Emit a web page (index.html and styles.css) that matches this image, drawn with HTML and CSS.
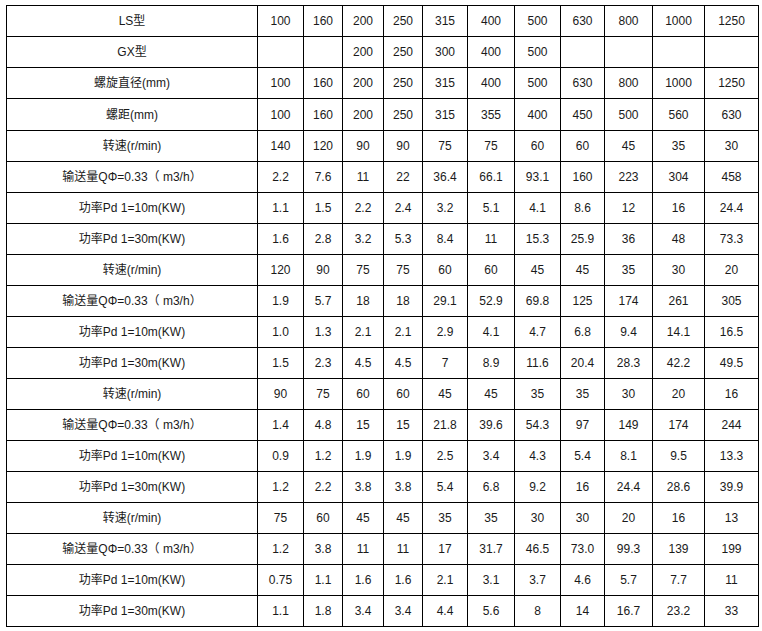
FILE: index.html
```html
<!DOCTYPE html>
<html lang="zh">
<head>
<meta charset="utf-8">
<title>LS型螺旋输送机参数</title>
<link rel="stylesheet" href="styles.css">
</head>
<body>
<table class="spec">
<colgroup>
<col class="c-label">
<col class="c1"><col class="c2"><col class="c3"><col class="c4"><col class="c5"><col class="c6">
<col class="c7"><col class="c8"><col class="c9"><col class="c10"><col class="c11">
</colgroup>
<tbody>
<tr><td>LS型</td><td>100</td><td>160</td><td>200</td><td>250</td><td>315</td><td>400</td><td>500</td><td>630</td><td>800</td><td>1000</td><td>1250</td></tr>
<tr><td>GX型</td><td></td><td></td><td>200</td><td>250</td><td>300</td><td>400</td><td>500</td><td></td><td></td><td></td><td></td></tr>
<tr><td>螺旋直径(mm)</td><td>100</td><td>160</td><td>200</td><td>250</td><td>315</td><td>400</td><td>500</td><td>630</td><td>800</td><td>1000</td><td>1250</td></tr>
<tr class="tall"><td>螺距(mm)</td><td>100</td><td>160</td><td>200</td><td>250</td><td>315</td><td>355</td><td>400</td><td>450</td><td>500</td><td>560</td><td>630</td></tr>
<tr><td>转速(r/min)</td><td>140</td><td>120</td><td>90</td><td>90</td><td>75</td><td>75</td><td>60</td><td>60</td><td>45</td><td>35</td><td>30</td></tr>
<tr><td>输送量QΦ=0.33（ m3/h）</td><td>2.2</td><td>7.6</td><td>11</td><td>22</td><td>36.4</td><td>66.1</td><td>93.1</td><td>160</td><td>223</td><td>304</td><td>458</td></tr>
<tr><td>功率Pd 1=10m(KW)</td><td>1.1</td><td>1.5</td><td>2.2</td><td>2.4</td><td>3.2</td><td>5.1</td><td>4.1</td><td>8.6</td><td>12</td><td>16</td><td>24.4</td></tr>
<tr><td>功率Pd 1=30m(KW)</td><td>1.6</td><td>2.8</td><td>3.2</td><td>5.3</td><td>8.4</td><td>11</td><td>15.3</td><td>25.9</td><td>36</td><td>48</td><td>73.3</td></tr>
<tr><td>转速(r/min)</td><td>120</td><td>90</td><td>75</td><td>75</td><td>60</td><td>60</td><td>45</td><td>45</td><td>35</td><td>30</td><td>20</td></tr>
<tr><td>输送量QΦ=0.33（ m3/h）</td><td>1.9</td><td>5.7</td><td>18</td><td>18</td><td>29.1</td><td>52.9</td><td>69.8</td><td>125</td><td>174</td><td>261</td><td>305</td></tr>
<tr><td>功率Pd 1=10m(KW)</td><td>1.0</td><td>1.3</td><td>2.1</td><td>2.1</td><td>2.9</td><td>4.1</td><td>4.7</td><td>6.8</td><td>9.4</td><td>14.1</td><td>16.5</td></tr>
<tr><td>功率Pd 1=30m(KW)</td><td>1.5</td><td>2.3</td><td>4.5</td><td>4.5</td><td>7</td><td>8.9</td><td>11.6</td><td>20.4</td><td>28.3</td><td>42.2</td><td>49.5</td></tr>
<tr><td>转速(r/min)</td><td>90</td><td>75</td><td>60</td><td>60</td><td>45</td><td>45</td><td>35</td><td>35</td><td>30</td><td>20</td><td>16</td></tr>
<tr><td>输送量QΦ=0.33（ m3/h）</td><td>1.4</td><td>4.8</td><td>15</td><td>15</td><td>21.8</td><td>39.6</td><td>54.3</td><td>97</td><td>149</td><td>174</td><td>244</td></tr>
<tr><td>功率Pd 1=10m(KW)</td><td>0.9</td><td>1.2</td><td>1.9</td><td>1.9</td><td>2.5</td><td>3.4</td><td>4.3</td><td>5.4</td><td>8.1</td><td>9.5</td><td>13.3</td></tr>
<tr><td>功率Pd 1=30m(KW)</td><td>1.2</td><td>2.2</td><td>3.8</td><td>3.8</td><td>5.4</td><td>6.8</td><td>9.2</td><td>16</td><td>24.4</td><td>28.6</td><td>39.9</td></tr>
<tr><td>转速(r/min)</td><td>75</td><td>60</td><td>45</td><td>45</td><td>35</td><td>35</td><td>30</td><td>30</td><td>20</td><td>16</td><td>13</td></tr>
<tr><td>输送量QΦ=0.33（ m3/h）</td><td>1.2</td><td>3.8</td><td>11</td><td>11</td><td>17</td><td>31.7</td><td>46.5</td><td>73.0</td><td>99.3</td><td>139</td><td>199</td></tr>
<tr><td>功率Pd 1=10m(KW)</td><td>0.75</td><td>1.1</td><td>1.6</td><td>1.6</td><td>2.1</td><td>3.1</td><td>3.7</td><td>4.6</td><td>5.7</td><td>7.7</td><td>11</td></tr>
<tr><td>功率Pd 1=30m(KW)</td><td>1.1</td><td>1.8</td><td>3.4</td><td>3.4</td><td>4.4</td><td>5.6</td><td>8</td><td>14</td><td>16.7</td><td>23.2</td><td>33</td></tr>
</tbody>
</table>
</body>
</html>
```
FILE: styles.css
```css
html, body {
  margin: 0;
  padding: 0;
  background: #fff;
}
body {
  padding: 5px 0 0 6px;
  font-family: "Liberation Sans", Arial, "Noto Sans CJK SC", sans-serif;
  font-size: 12px;
  color: #1a1a1a;
}
.spec {
  border-collapse: collapse;
  table-layout: fixed;
  width: 753px;
}
.spec td {
  border: 1px solid #000;
  height: 30px;
  padding: 0;
  text-align: center;
  vertical-align: middle;
  line-height: 14px;
  white-space: nowrap;
}
.spec .tall td {
  height: 31px;
}
.c-label { width: 251px; }
.c1 { width: 46px; }
.c2 { width: 39px; }
.c3 { width: 41px; }
.c4 { width: 39px; }
.c5 { width: 45px; }
.c6 { width: 47px; }
.c7 { width: 46px; }
.c8 { width: 44px; }
.c9 { width: 48px; }
.c10 { width: 52px; }
.c11 { width: 54px; }
```
